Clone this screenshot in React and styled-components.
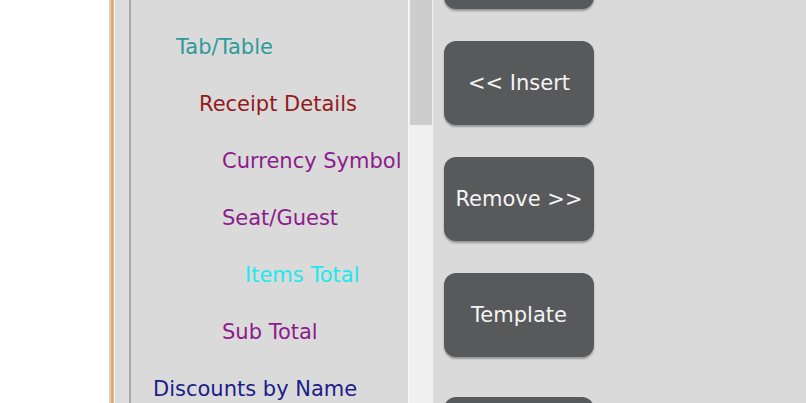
import React from "react";
import styled, { createGlobalStyle } from "styled-components";

const Global = createGlobalStyle`
  html, body { margin: 0; padding: 0; height: 403px; overflow: hidden; background: #ffffff; }
  #root { height: 403px; }
`;

const Page = styled.div`
  display: flex;
  height: 403px;
  width: 806px;
  overflow: hidden;
  font-family: "DejaVu Sans", "Liberation Sans", sans-serif;
`;

const WhiteMargin = styled.div`
  width: 109px;
  flex: none;
  background: #ffffff;
  border-right: 1px solid #d4d4d4;
`;

const OrangeEdge = styled.div`
  width: 4px;
  flex: none;
  background: linear-gradient(to right, #f0d2a8, #d9a46a, #e6bb86);
`;

const Gutter = styled.div`
  width: 14px;
  flex: none;
  background: #dcdcdc;
  border-left: 1px solid #f6f6f6;
  border-right: 2px solid #a9a9a9;
`;

const ListPanel = styled.div`
  width: 277px;
  flex: none;
  background: #dadada;
  padding: 18px 0 0 22px;
  box-sizing: border-box;
  display: flex;
  flex-direction: column;
`;

const Row = styled.div`
  height: 57px;
  flex: none;
  display: flex;
  align-items: center;
  padding-left: ${(p) => p.$level * 23}px;
  color: ${(p) => p.$color};
  font-size: 21px;
  white-space: nowrap;
`;

const ScrollTrack = styled.div`
  width: 25px;
  flex: none;
  background: #f0f0f0;
  border-left: 1px solid #f7f7f7;
  box-sizing: border-box;
  padding-left: 1px;
`;

const Thumb = styled.div`
  width: 22px;
  height: 125px;
  background: #cdcdcd;
`;

const ButtonArea = styled.div`
  flex: 1;
  background: #dadada;
  padding-left: 11px;
`;

const ButtonColumn = styled.div`
  display: flex;
  flex-direction: column;
  gap: 32px;
  margin-top: -75px;
`;

const ActionButton = styled.button`
  width: 150px;
  height: 84px;
  flex: none;
  margin-top: ${(p) => p.$extra || 0}px;
  border: none;
  border-radius: 12px;
  background: #58595b;
  color: #f4f4f4;
  font-family: "DejaVu Sans", "Liberation Sans", sans-serif;
  font-size: 21px;
  box-shadow: 0 2px 2px rgba(0, 0, 0, 0.3);
  padding: 0;
`;

const rows = [
  { label: "Tab/Table", level: 1, color: "#2e9a9c" },
  { label: "Receipt Details", level: 2, color: "#931a1c" },
  { label: "Currency Symbol", level: 3, color: "#8c1c8c" },
  { label: "Seat/Guest", level: 3, color: "#8c1c8c" },
  { label: "Items Total", level: 4, color: "#1fe8ee" },
  { label: "Sub Total", level: 3, color: "#8c1c8c" },
  { label: "Discounts by Name", level: 0, color: "#1c1c8a" },
];

const buttons = [
  { label: "" },
  { label: "<< Insert" },
  { label: "Remove >>" },
  { label: "Template" },
  { label: "", extra: 8 },
];

export default function App() {
  return (
    <>
      <Global />
      <Page>
        <WhiteMargin />
        <OrangeEdge />
        <Gutter />
        <ListPanel>
          {rows.map((r) => (
            <Row key={r.label} $level={r.level} $color={r.color}>
              {r.label}
            </Row>
          ))}
        </ListPanel>
        <ScrollTrack>
          <Thumb />
        </ScrollTrack>
        <ButtonArea>
          <ButtonColumn>
            {buttons.map((b, i) => (
              <ActionButton key={i} $extra={b.extra}>
                {b.label}
              </ActionButton>
            ))}
          </ButtonColumn>
        </ButtonArea>
      </Page>
    </>
  );
}
